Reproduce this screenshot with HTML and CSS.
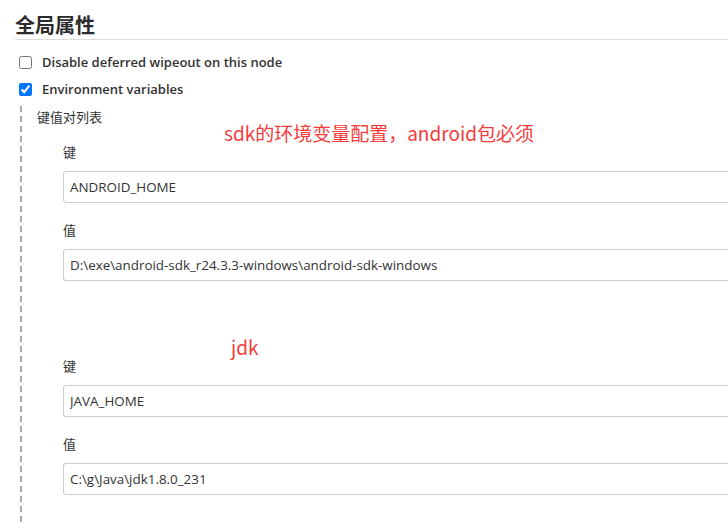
FILE: index.html
```html
<!DOCTYPE html>
<html lang="zh">
<head>
<meta charset="utf-8">
<title>全局属性</title>
<link rel="stylesheet" href="styles.css">
</head>
<body>
<div class="page">
  <h2 class="section-title">全局属性</h2>
  <label class="check-row"><input type="checkbox" class="check"><span>Disable deferred wipeout on this node</span></label>
  <label class="check-row"><input type="checkbox" class="check" checked><span>Environment variables</span></label>
  <div class="nested">
    <div class="list-title">键值对列表</div>
    <div class="entry">
      <div class="note note-sdk">sdk的环境变量配置，android包必须</div>
      <div class="field-label">键</div>
      <input class="field" type="text" value="ANDROID_HOME">
      <div class="field-label second">值</div>
      <input class="field" type="text" value="D:\exe\android-sdk_r24.3.3-windows\android-sdk-windows">
    </div>
    <div class="entry entry-next">
      <div class="note note-jdk">jdk</div>
      <div class="field-label">键</div>
      <input class="field" type="text" value="JAVA_HOME">
      <div class="field-label second">值</div>
      <input class="field" type="text" value="C:\g\Java\jdk1.8.0_231">
    </div>
  </div>
</div>
</body>
</html>
```

FILE: styles.css
```css
html, body {
  margin: 0;
  padding: 0;
  background: #fff;
  overflow: hidden;
}
body {
  width: 728px;
  height: 523px;
  font-family: "Open Sans", "Noto Sans CJK SC", sans-serif;
  color: #333;
  font-size: 13px;
}
.page {
  padding-left: 15px;
}
.section-title {
  margin: 0;
  padding-top: 11px;
  height: 28px;
  line-height: 28px;
  font-size: 20px;
  font-weight: 700;
  font-family: "Noto Sans CJK SC", sans-serif;
  color: #2b2b2b;
  border-bottom: 1px solid #ddd;
}
.check-row {
  display: flex;
  align-items: center;
  height: 20px;
  margin-left: 4px;
  font-weight: 600;
}
.check-row:first-of-type {
  margin-top: 12px;
}
.check-row + .check-row {
  margin-top: 7px;
}
.check {
  width: 13px;
  height: 13px;
  margin: 0 10px 0 0;
}
.nested {
  margin-left: 5px;
  margin-top: 5px;
  padding-left: 17px;
  padding-bottom: 40px;
  background-image: repeating-linear-gradient(to bottom, #aaa 0, #aaa 6px, transparent 6px, transparent 10px);
  background-size: 2px 100%;
  background-repeat: no-repeat;
  background-position: 0 2px;
}
.list-title {
  font-family: "Noto Sans CJK SC", sans-serif;
  height: 20px;
  line-height: 20px;
  padding-top: 3px;
}
.entry {
  position: relative;
  padding-left: 26px;
  padding-top: 16px;
}
.entry-next {
  padding-top: 76px;
}
.field-label {
  font-family: "Noto Sans CJK SC", sans-serif;
  height: 20px;
  line-height: 18px;
  margin-bottom: 8px;
}
.field-label.second {
  margin-top: 18px;
}
.field {
  display: block;
  box-sizing: border-box;
  width: 720px;
  height: 32px;
  margin: 0;
  padding: 0 6px;
  border: 1px solid #ccc;
  border-radius: 3px;
  font-family: "Open Sans", "Noto Sans CJK SC", sans-serif;
  font-size: 13.4px;
  color: #333;
  background: #fff;
}
.note {
  position: absolute;
  color: #f53b3b;
  font-family: "Noto Sans CJK SC", sans-serif;
  font-size: 19px;
  line-height: 24px;
  white-space: nowrap;
}
.note-sdk {
  left: 187px;
  top: -6px;
}
.note-jdk {
  left: 194px;
  top: 54px;
}
```
